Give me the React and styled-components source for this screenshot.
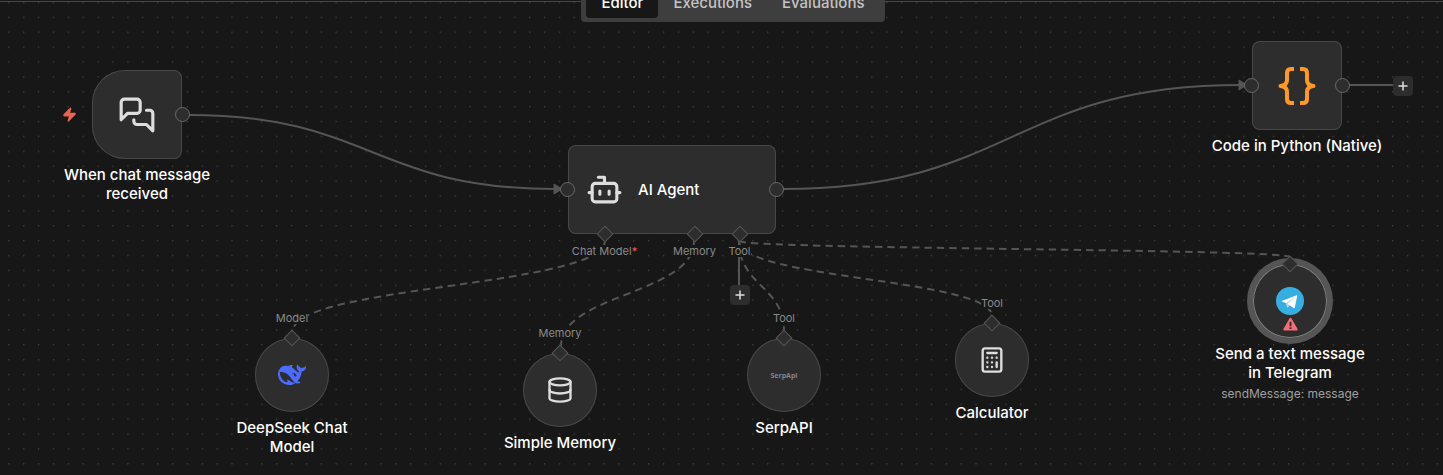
import React from "react";
import styled, { createGlobalStyle, css } from "styled-components";

const colors = {
  canvas: "#171717",
  dot: "#484848",
  node: "#2d2d2d",
  border: "#474747",
  edge: "#555555",
  icon: "#dedede",
};

const GlobalStyle = createGlobalStyle`
  * {
    box-sizing: border-box;
  }

  body {
    margin: 0;
    background: ${colors.canvas};
    font-family: Inter, "Liberation Sans", sans-serif;
  }
`;

const solidEdges = [
  "M188 115 C372 115 372 189 556 189",
  "M783 189 C1012 189 1012 85 1240 85",
  "M1349 85 H1393",
  "M739 241 V286",
];

const dashedEdges = [
  "M605 241 C605 286 293 286 293 331",
  "M694 241 C694 294 561 294 561 346",
  "M739 241 C739 286 784 286 784 331",
  "M739 241 C739 279 992 279 992 316",
  "M739 241 C739 249 1290 249 1290 257",
];

const tabs = ["Editor", "Executions", "Evaluations"];

const Edges = () => (
  <EdgeLayer aria-hidden="true">
    <defs>
      <pattern id="dots" x="8.2" y="1.8" width="14.88" height="14.88" patternUnits="userSpaceOnUse">
        <circle cx="0.7" cy="0.7" r="0.7" fill={colors.dot} />
      </pattern>
    </defs>
    <rect width="100%" height="100%" fill="url(#dots)" />
    <g fill="none" stroke={colors.edge} strokeWidth="2">
      {solidEdges.map((d) => (
        <path key={d} d={d} />
      ))}
      {dashedEdges.map((d) => (
        <path key={d} d={d} strokeDasharray="7.4 5" />
      ))}
    </g>
    <g fill={colors.edge} stroke={colors.edge} strokeLinejoin="round">
      <path d="M554 184 L562 189 L554 194 Z" />
      <path d="M1239 80 L1247 85 L1239 90 Z" />
    </g>
  </EdgeLayer>
);

const ChatIcon = () => (
  <LineIcon $size={38} viewBox="0 0 24 24">
    <path d="M14 9a2 2 0 0 1-2 2H6l-4 4V4c0-1.1.9-2 2-2h8a2 2 0 0 1 2 2z" />
    <path d="M18 9h2a2 2 0 0 1 2 2v11l-4-4h-6a2 2 0 0 1-2-2v-1" />
  </LineIcon>
);

const BotIcon = () => (
  <LineIcon $size={37} viewBox="0 0 24 24">
    <path d="M12 8V4H8" />
    <rect width="16" height="12" x="4" y="8" rx="2" />
    <path d="M2 14h2M20 14h2M15 13v2M9 13v2" />
  </LineIcon>
);

const BracesIcon = () => (
  <LineIcon $size={40} $color="#ff9922" viewBox="0 0 40 40">
    <path
      strokeWidth="4"
      strokeLinecap="butt"
      d="M17 3H14Q10 3 10 7V14Q10 19.500 3.500 20Q10 20.500 10 26V33Q10 37 14 37H17M23 3H26Q30 3 30 7V14Q30 19.500 36.500 20Q30 20.500 30 26V33Q30 37 26 37H23"
    />
  </LineIcon>
);

const DatabaseIcon = () => (
  <LineIcon $size={28} viewBox="0 0 24 24">
    <ellipse cx="12" cy="5" rx="9" ry="3" />
    <path d="M3 5v14a9 3 0 0 0 18 0V5" />
    <path d="M3 12a9 3 0 0 0 18 0" />
  </LineIcon>
);

const CalculatorIcon = () => (
  <LineIcon $size={28} viewBox="0 0 24 24">
    <rect width="16" height="20" x="4" y="2" rx="2" />
    <path d="M8 6h8M16 14v4M16 10h.01M12 10h.01M8 10h.01M12 14h.01M8 14h.01M12 18h.01M8 18h.01" />
  </LineIcon>
);

const DeepSeekIcon = () => (
  <SolidIcon $size={28} $color="#4d6bfe" viewBox="0 0 24 24">
    <path d="M23.748 4.482c-.254-.124-.364.113-.512.234-.051.039-.094.09-.137.136-.372.397-.806.657-1.373.626-.829-.046-1.537.214-2.163.848-.133-.782-.575-1.248-1.247-1.548-.352-.156-.708-.311-.955-.65-.172-.241-.219-.51-.305-.774-.055-.16-.11-.323-.293-.35-.2-.031-.278.136-.356.276-.313.572-.434 1.202-.422 1.84.027 1.436.633 2.58 1.838 3.393.137.093.172.187.129.323-.082.28-.18.552-.266.833-.055.179-.137.217-.329.14a5.526 5.526 0 01-1.736-1.18c-.857-.828-1.631-1.742-2.597-2.458a11.365 11.365 0 00-.689-.471c-.985-.957.13-1.743.388-1.836.27-.098.093-.432-.779-.428-.872.004-1.67.295-2.687.684a3.055 3.055 0 01-.465.137 9.597 9.597 0 00-2.883-.102c-1.885.21-3.39 1.102-4.497 2.623C.082 8.606-.231 10.684.152 12.85c.403 2.284 1.569 4.175 3.36 5.653 1.858 1.533 3.997 2.284 6.438 2.14 1.482-.085 3.133-.284 4.994-1.86.47.234.962.327 1.78.397.63.059 1.236-.03 1.705-.128.735-.156.684-.837.419-.961-2.155-1.004-1.682-.595-2.113-.926 1.096-1.296 2.746-2.642 3.392-7.003.05-.347.007-.565 0-.845-.004-.17.035-.237.23-.256a4.173 4.173 0 001.545-.475c1.396-.763 1.96-2.015 2.093-3.517.02-.23-.004-.467-.247-.588zM11.581 18c-2.089-1.642-3.102-2.183-3.52-2.16-.392.024-.321.471-.235.763.09.288.207.486.371.739.114.167.192.416-.113.603-.673.416-1.842-.14-1.897-.167-1.361-.802-2.5-1.86-3.301-3.307-.774-1.393-1.224-2.887-1.298-4.482-.02-.386.093-.522.477-.592a4.696 4.696 0 011.529-.039c2.132.312 3.946 1.265 5.468 2.774.868.86 1.525 1.887 2.202 2.891.72 1.066 1.494 2.082 2.48 2.914.348.292.625.514.891.677-.802.09-2.14.11-3.054-.614zm1-6.44a.306.306 0 01.415-.287.302.302 0 01.2.288.306.306 0 01-.31.307.303.303 0 01-.304-.308zm3.11 1.596c-.2.081-.399.151-.59.16a1.245 1.245 0 01-.798-.254c-.274-.23-.47-.358-.552-.758a1.73 1.73 0 01.016-.588c.07-.327-.008-.537-.239-.727-.187-.156-.426-.199-.688-.199a.559.559 0 01-.254-.078c-.11-.054-.2-.19-.114-.358.028-.054.16-.186.192-.21.356-.202.767-.136 1.146.016.352.144.618.408 1.001.782.391.451.462.576.685.914.176.265.336.537.445.848.067.195-.019.354-.25.452z" />
  </SolidIcon>
);

const TelegramIcon = () => (
  <SolidIcon $size={28} $color="#37aee2" viewBox="0 0 28 28">
    <circle cx="14" cy="14" r="14" />
    <path fill="#c8daea" d="M11.500 20.500C11 20.500 11.100 20.300 11 19.900L9.600 15.200L19.500 9.500Z" />
    <path fill="#a9c9dd" d="M11.500 20.500C11.900 20.500 12.100 20.300 12.300 20.100L14.200 18.300L11.800 16.800Z" />
    <path fill="#ffffff" d="M11.800 16.900L17.500 21.100C18.200 21.500 18.700 21.300 18.800 20.500L21.100 9.500C21.400 8.500 20.700 8.100 20.100 8.400L6.400 13.700C5.500 14.100 5.500 14.600 6.200 14.800L9.700 15.900L17.900 10.800C18.300 10.500 18.600 10.700 18.300 10.900Z" />
  </SolidIcon>
);

const WarningIcon = () => (
  <SolidIcon $size={15} $color="#f56c78" viewBox="0 0 16 16">
    <path d="M6.900 1.700a1.300 1.300 0 0 1 2.200 0l6.300 10.900a1.200 1.200 0 0 1-1.100 1.900H1.700a1.200 1.200 0 0 1-1.100-1.900z" />
    <path fill={colors.node} d="M7 5h2v4.800H7zM7 10.900h2v2H7z" />
  </SolidIcon>
);

const BoltIcon = () => (
  <SolidIcon $size={15} $color="#ee6352" viewBox="0 0 24 24">
    <path
      stroke="currentColor"
      strokeWidth="2"
      strokeLinejoin="round"
      d="M4 14a1 1 0 0 1-.78-1.63l9.900-10.200a.5.5 0 0 1 .86.46l-1.920 6.020A1 1 0 0 0 13 10h7a1 1 0 0 1 .78 1.630l-9.900 10.200a.5.5 0 0 1-.86-.46l1.920-6.020A1 1 0 0 0 11 14z"
    />
  </SolidIcon>
);

const PlusIcon = () => (
  <LineIcon $size={14} viewBox="0 0 14 14">
    <path strokeWidth="1.500" d="M7 3v8M3 7h8" />
  </LineIcon>
);

const SubNode = ({ x, y, input, name, children }) => (
  <Step $x={x} $y={y}>
    <EdgeLabel>{input}</EdgeLabel>
    <Diamond $spaced />
    <Node $shape="round">{children}</Node>
    <Caption>{name}</Caption>
  </Step>
);

const App = () => {
  return (
    <>
      <GlobalStyle />
      <Canvas>
        <Edges />
        <TopLine />
        <TabBar>
          <TabGroup aria-label="Workflow views">
            {tabs.map((tab) => (
              <Tab key={tab} type="button" $active={tab === "Editor"}>
                {tab}
              </Tab>
            ))}
          </TabGroup>
        </TabBar>

        <Step $x={137} $y={70}>
          <Node $shape="trigger">
            <TriggerMark>
              <BoltIcon />
            </TriggerMark>
            <ChatIcon />
            <Port $side="right" />
          </Node>
          <Caption $width={150}>When chat message received</Caption>
        </Step>

        <Step $x={672} $y={145}>
          <Node $shape="wide">
            <BotIcon />
            <NodeTitle>AI Agent</NodeTitle>
            <Port $side="left" />
            <Port $side="right" />
          </Node>
          <Slots>
            <Slot>
              <Diamond />
              <EdgeLabel>
                Chat Model<Required>*</Required>
              </EdgeLabel>
            </Slot>
            <Slot $column={3}>
              <Diamond />
              <EdgeLabel>Memory</EdgeLabel>
            </Slot>
            <Slot $column={4}>
              <Diamond />
              <EdgeLabel>Tool</EdgeLabel>
              <AddButton type="button" aria-label="Add tool">
                <PlusIcon />
              </AddButton>
            </Slot>
          </Slots>
        </Step>

        <Step $x={1297} $y={41}>
          <Node>
            <BracesIcon />
            <Port $side="left" />
            <Port $side="right" />
            <NextStep>
              <AddButton type="button" aria-label="Add next step">
                <PlusIcon />
              </AddButton>
            </NextStep>
          </Node>
          <Caption $width={180}>Code in Python (Native)</Caption>
        </Step>

        <SubNode x={292} y={312} input="Model" name="DeepSeek Chat Model">
          <DeepSeekIcon />
        </SubNode>
        <SubNode x={560} y={327} input="Memory" name="Simple Memory">
          <DatabaseIcon />
        </SubNode>
        <SubNode x={784} y={312} input="Tool" name="SerpAPI">
          <SerpLogo>SerpApi</SerpLogo>
        </SubNode>
        <SubNode x={992} y={297} input="Tool" name="Calculator">
          <CalculatorIcon />
        </SubNode>

        <Step $x={1290} $y={258}>
          <Diamond />
          <Node $shape="round" $selected>
            <TelegramIcon />
            <NodeStatus>
              <WarningIcon />
            </NodeStatus>
          </Node>
          <Caption $width={150}>Send a text message in Telegram</Caption>
          <Subtitle>sendMessage: message</Subtitle>
        </Step>
      </Canvas>
    </>
  );
};

const Canvas = styled.main`
  position: relative;
  min-height: 100vh;
  overflow: hidden;
  background: ${colors.canvas};
`;

const EdgeLayer = styled.svg`
  position: absolute;
  inset: 0;
  width: 100%;
  height: 100%;
`;

const TopLine = styled.div`
  position: relative;
  height: 2px;
  border-bottom: 1px solid ${colors.border};
`;

const TabBar = styled.div`
  position: relative;
  display: flex;
  justify-content: center;
  margin-top: -20px;
  padding-left: 23px;
`;

const TabGroup = styled.nav`
  display: flex;
  padding: 4px 5px;
  border-radius: 4px;
  background: #3e3e3e;
`;

const Tab = styled.button`
  height: 32px;
  padding: 0 15px;
  border: 0;
  border-radius: 4px;
  background: ${(props) => (props.$active ? colors.canvas : "transparent")};
  color: ${(props) => (props.$active ? "#ffffff" : "#c4c4c4")};
  font: 500 15px Inter, sans-serif;
  cursor: pointer;
`;

/* x is the centre of the step, y is its top edge */
const Step = styled.section`
  position: absolute;
  left: ${(props) => props.$x - 105}px;
  top: ${(props) => props.$y}px;
  display: flex;
  flex-direction: column;
  align-items: center;
  width: 210px;
`;

const shapes = {
  square: css`
    width: 90px;
    height: 89px;
    border-radius: 8px;
  `,
  trigger: css`
    width: 90px;
    height: 89px;
    border-radius: 33px 8px 8px 33px;
  `,
  wide: css`
    width: 208px;
    height: 89px;
    justify-content: flex-start;
    gap: 15px;
    padding-left: 18px;
    border-radius: 8px;
  `,
  round: css`
    width: 74px;
    height: 74px;
    border-radius: 50%;
  `,
};

const Node = styled.div`
  position: relative;
  display: flex;
  align-items: center;
  justify-content: center;
  background: ${colors.node};
  box-shadow: inset 0 0 0 1px ${(props) => (props.$selected ? "#808080" : colors.border)}
    ${(props) => props.$selected && `, 0 0 0 6px ${colors.edge}`};
  ${(props) => shapes[props.$shape || "square"]}
`;

const TriggerMark = styled.span`
  position: absolute;
  right: 100%;
  margin-right: 15px;
`;

const NodeTitle = styled.h2`
  margin: 0;
  color: #ffffff;
  font-size: 15px;
  font-weight: 500;
  line-height: 19px;
`;

const Port = styled.span`
  position: absolute;
  ${(props) => props.$side}: -8px;
  width: 15px;
  height: 15px;
  border: 1px solid #6a6a6a;
  border-radius: 50%;
  background: ${colors.node};
`;

const NextStep = styled.span`
  position: absolute;
  left: 100%;
  margin-left: 51px;
`;

const Diamond = styled.span`
  position: relative;
  z-index: 1;
  flex: none;
  width: 12px;
  height: 12px;
  margin-top: ${(props) => (props.$spaced ? 8 : 0)}px;
  margin-bottom: -6px;
  border: 1px solid ${colors.edge};
  background: ${colors.node};
  transform: rotate(45deg);
`;

const Slots = styled.div`
  display: grid;
  grid-template-columns: repeat(4, 45px);
  width: 208px;
  margin-top: -6px;
  padding-left: 14px;
`;

const Slot = styled.div`
  grid-column: ${(props) => props.$column || 1};
  display: flex;
  flex-direction: column;
  align-items: center;

  ${Diamond} {
    margin-bottom: 5px;
  }
`;

const Caption = styled.h3`
  width: ${(props) => props.$width || 120}px;
  margin: 6px 0 0;
  color: #ffffff;
  font-size: 15px;
  font-weight: 500;
  line-height: 19px;
  text-align: center;
`;

const Subtitle = styled.p`
  margin: 2px 0 0;
  color: #a0a0a0;
  font-size: 12px;
  line-height: 19px;
`;

const EdgeLabel = styled.span`
  background: ${colors.canvas};
  color: #8a8a8a;
  font-size: 11px;
  line-height: 12px;
  white-space: nowrap;
`;

const Required = styled.span`
  color: #f5545d;
`;

const AddButton = styled.button`
  display: grid;
  place-items: center;
  width: 20px;
  height: 20px;
  padding: 0;
  border: 0;
  border-radius: 4px;
  background: ${colors.node};
  cursor: pointer;

  ${Slot} & {
    margin-top: 28px;
  }
`;

const SerpLogo = styled.span`
  color: #85838f;
  font: 700 7px "Open Sans", sans-serif;
`;

const NodeStatus = styled.span`
  position: absolute;
  bottom: 6px;
`;

const Icon = styled.svg`
  flex: none;
  display: block;
  width: ${(props) => props.$size}px;
  height: ${(props) => props.$size}px;
  color: ${(props) => props.$color || colors.icon};
`;

const LineIcon = styled(Icon)`
  fill: none;
  stroke: currentColor;
  stroke-width: 2;
  stroke-linecap: round;
  stroke-linejoin: round;
`;

const SolidIcon = styled(Icon)`
  fill: currentColor;
`;

export default App;
